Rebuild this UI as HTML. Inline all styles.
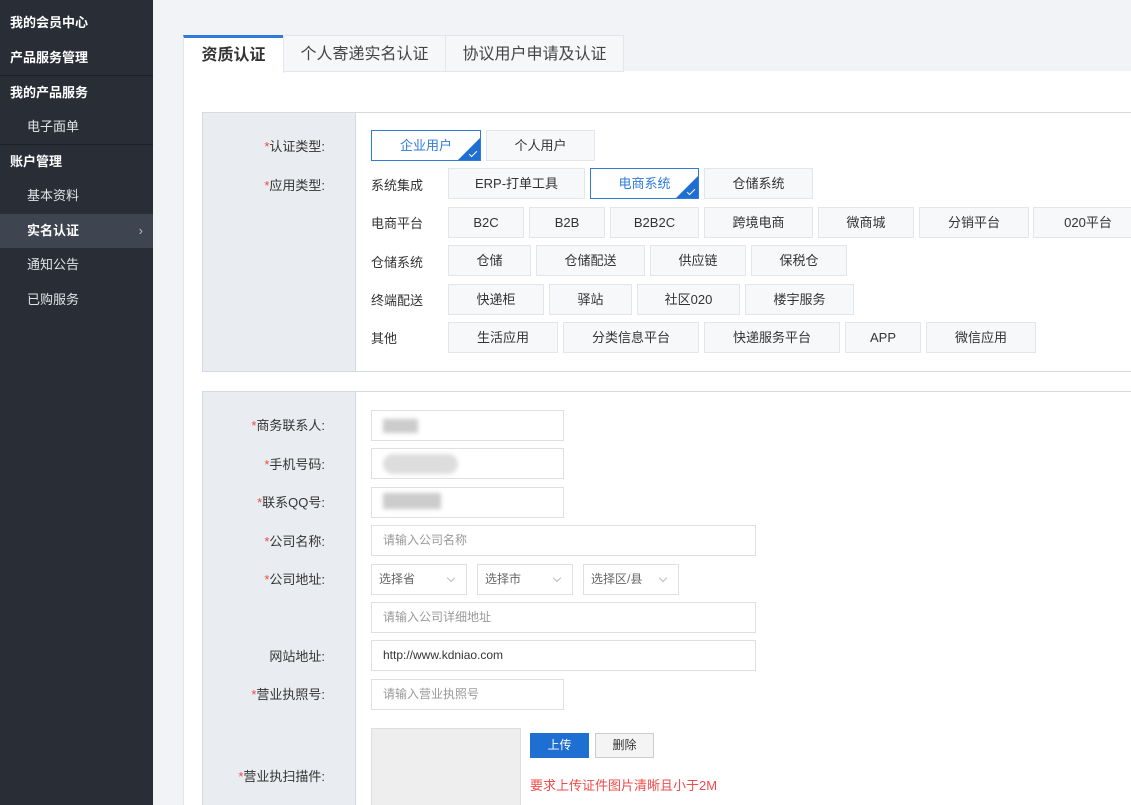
<!DOCTYPE html>
<html style="width:1131px;height:805px;overflow:hidden"><head><meta charset="utf-8"><style>
*{margin:0;padding:0;box-sizing:border-box}
body{width:1131px;height:805px;overflow:hidden;background:#f1f3f6;font-family:"Liberation Sans","Noto Sans CJK SC",sans-serif;font-size:13px;color:#333;position:relative}
.a{position:absolute}
#side{left:0;top:0;width:153px;height:805px;background:#282d36}
.si{position:absolute;left:0;width:153px;height:34px;line-height:34px;color:#fff;font-size:13px}
.h{padding-left:10px;font-weight:bold}
.s{padding-left:27px;color:#e0e3e8}
.dv{position:absolute;left:0;width:153px;height:1px;background:#1e2228}
.tab{position:absolute;top:35px;height:37px;line-height:38px;text-align:center;font-size:16px;color:#444;background:#f6f7f9;border:1px solid #e3e6ea}
.btn{position:absolute;height:31px;line-height:29px;text-align:center;border:1px solid #e2e5e9;background:#f7f8fa;font-size:13px;color:#333}
.sel{border-color:#2f7bd9;background:#fff;color:#2f7bd9}
.sel:after{content:"";position:absolute;right:0;bottom:0;border-style:solid;border-width:0 0 22px 22px;border-color:transparent transparent #1f6fd3 transparent}
.sel i{position:absolute;right:3px;bottom:5px;width:8px;height:4px;border-left:1.5px solid #fff;border-bottom:1.5px solid #fff;transform:rotate(-45deg);z-index:2}
.rl{position:absolute;left:371px;font-size:13px;color:#333}
.lb{position:absolute;right:806px;font-size:13px;color:#333;text-align:right}
.lb b{color:#f04b4b;font-weight:normal}
.in{position:absolute;left:371px;height:31px;border:1px solid #dcdfe3;background:#fff;line-height:29px;padding-left:11px;font-size:12px;color:#999}
.dd:after{content:"";position:absolute;right:12px;top:10px;width:5px;height:5px;border-right:1px solid #bbb;border-bottom:1px solid #bbb;transform:rotate(45deg)}
</style></head><body>
<div id="side" class="a">
<div class="si h" style="top:6px">我的会员中心</div>
<div class="si h" style="top:41px">产品服务管理</div>
<div class="dv" style="top:75px"></div>
<div class="si h" style="top:76px">我的产品服务</div>
<div class="si s" style="top:110px">电子面单</div>
<div class="dv" style="top:144px"></div>
<div class="si h" style="top:145px">账户管理</div>
<div class="si s" style="top:179px">基本资料</div>
<div class="si s" style="top:214px;background:#3e4450;color:#fff;font-weight:bold">实名认证<span style="position:absolute;right:10px;font-weight:normal;color:#bbb">›</span></div>
<div class="si s" style="top:248px">通知公告</div>
<div class="si s" style="top:283px">已购服务</div>
</div>
<div class="a" style="left:183px;top:71px;width:948px;height:734px;background:#fff;border-left:1px solid #e3e6ea"></div>
<div class="tab" style="left:183px;width:101px;background:#fff;border-top:3px solid #2f7bd9;border-bottom:none;color:#333;font-weight:bold;line-height:36px;height:38px">资质认证</div>
<div class="tab" style="left:283px;width:163px">个人寄递实名认证</div>
<div class="tab" style="left:445px;width:179px">协议用户申请及认证</div>

<div class="a" style="left:202px;top:112px;width:929px;height:260px;border:1px solid #d6d9dd;border-right:none;background:#fff"></div>
<div class="a" style="left:203px;top:113px;width:153px;height:258px;background:#e9ecf0;border-right:1px solid #d6d9dd"></div>
<div class="lb" style="top:136px"><b>*</b>认证类型:</div>
<div class="lb" style="top:175px"><b>*</b>应用类型:</div>
<div class="btn sel" style="left:371px;top:130px;width:110px">企业用户<i></i></div>
<div class="btn" style="left:486px;top:130px;width:109px">个人用户</div>
<div class="rl" style="top:175px">系统集成</div>
<div class="btn" style="left:448px;top:168px;width:137px">ERP-打单工具</div>
<div class="btn sel" style="left:590px;top:168px;width:109px">电商系统<i></i></div>
<div class="btn" style="left:704px;top:168px;width:109px">仓储系统</div>
<div class="rl" style="top:213px">电商平台</div>
<div class="btn" style="left:448px;top:207px;width:76px">B2C</div>
<div class="btn" style="left:529px;top:207px;width:76px">B2B</div>
<div class="btn" style="left:610px;top:207px;width:89px">B2B2C</div>
<div class="btn" style="left:704px;top:207px;width:109px">跨境电商</div>
<div class="btn" style="left:818px;top:207px;width:96px">微商城</div>
<div class="btn" style="left:919px;top:207px;width:110px">分销平台</div>
<div class="btn" style="left:1033px;top:207px;width:110px">020平台</div>
<div class="rl" style="top:252px">仓储系统</div>
<div class="btn" style="left:448px;top:245px;width:83px">仓储</div>
<div class="btn" style="left:536px;top:245px;width:109px">仓储配送</div>
<div class="btn" style="left:650px;top:245px;width:96px">供应链</div>
<div class="btn" style="left:751px;top:245px;width:96px">保税仓</div>
<div class="rl" style="top:290px">终端配送</div>
<div class="btn" style="left:448px;top:284px;width:96px">快递柜</div>
<div class="btn" style="left:549px;top:284px;width:83px">驿站</div>
<div class="btn" style="left:637px;top:284px;width:103px">社区020</div>
<div class="btn" style="left:745px;top:284px;width:109px">楼宇服务</div>
<div class="rl" style="top:328px">其他</div>
<div class="btn" style="left:448px;top:322px;width:110px">生活应用</div>
<div class="btn" style="left:563px;top:322px;width:136px">分类信息平台</div>
<div class="btn" style="left:704px;top:322px;width:136px">快递服务平台</div>
<div class="btn" style="left:845px;top:322px;width:76px">APP</div>
<div class="btn" style="left:926px;top:322px;width:110px">微信应用</div>

<div class="a" style="left:202px;top:391px;width:929px;height:414px;border:1px solid #d6d9dd;border-right:none;border-bottom:none;background:#fff"></div>
<div class="a" style="left:203px;top:392px;width:153px;height:413px;background:#e9ecf0;border-right:1px solid #d6d9dd"></div>
<div class="lb" style="top:415px"><b>*</b>商务联系人:</div>
<div class="lb" style="top:454px"><b>*</b>手机号码:</div>
<div class="lb" style="top:492px"><b>*</b>联系QQ号:</div>
<div class="lb" style="top:531px"><b>*</b>公司名称:</div>
<div class="lb" style="top:569px"><b>*</b>公司地址:</div>
<div class="lb" style="top:646px">网站地址:</div>
<div class="lb" style="top:684px"><b>*</b>营业执照号:</div>
<div class="lb" style="top:766px"><b>*</b>营业执扫描件:</div>
<div class="in" style="top:410px;width:193px"><span style="display:inline-block;margin-top:8px;width:35px;height:14px;background:#ccc;filter:blur(2px)"></span></div>
<div class="in" style="top:448px;width:193px"><span style="display:inline-block;margin-top:5px;width:75px;height:20px;border-radius:10px;background:#ddd;filter:blur(2px)"></span></div>
<div class="in" style="top:487px;width:193px"><span style="display:inline-block;margin-top:5px;width:58px;height:16px;background:#ccc;filter:blur(2px)"></span></div>
<div class="in" style="top:525px;width:385px">请输入公司名称</div>
<div class="in dd" style="top:564px;width:96px;padding-left:7px;color:#666">选择省</div>
<div class="in dd" style="left:477px;top:564px;width:96px;padding-left:7px;color:#666">选择市</div>
<div class="in dd" style="left:583px;top:564px;width:96px;padding-left:7px;color:#666">选择区/县</div>
<div class="in" style="top:602px;width:385px">请输入公司详细地址</div>
<div class="in" style="top:640px;width:385px;color:#333">http://www.kdniao.com</div>
<div class="in" style="top:679px;width:193px">请输入营业执照号</div>
<div class="a" style="left:371px;top:728px;width:150px;height:77px;background:#eeeeee;border:1px solid #ddd;border-bottom:none"></div>
<div class="a" style="left:530px;top:733px;width:59px;height:25px;background:#1f6fd3;color:#fff;text-align:center;line-height:25px;font-size:12px">上传</div>
<div class="a" style="left:595px;top:733px;width:59px;height:25px;background:#f4f4f4;border:1px solid #ccc;text-align:center;line-height:23px;font-size:12px">删除</div>
<div class="a" style="left:530px;top:775px;color:#f04b4b;font-size:13px">要求上传证件图片清晰且小于2M</div>
</body></html>
